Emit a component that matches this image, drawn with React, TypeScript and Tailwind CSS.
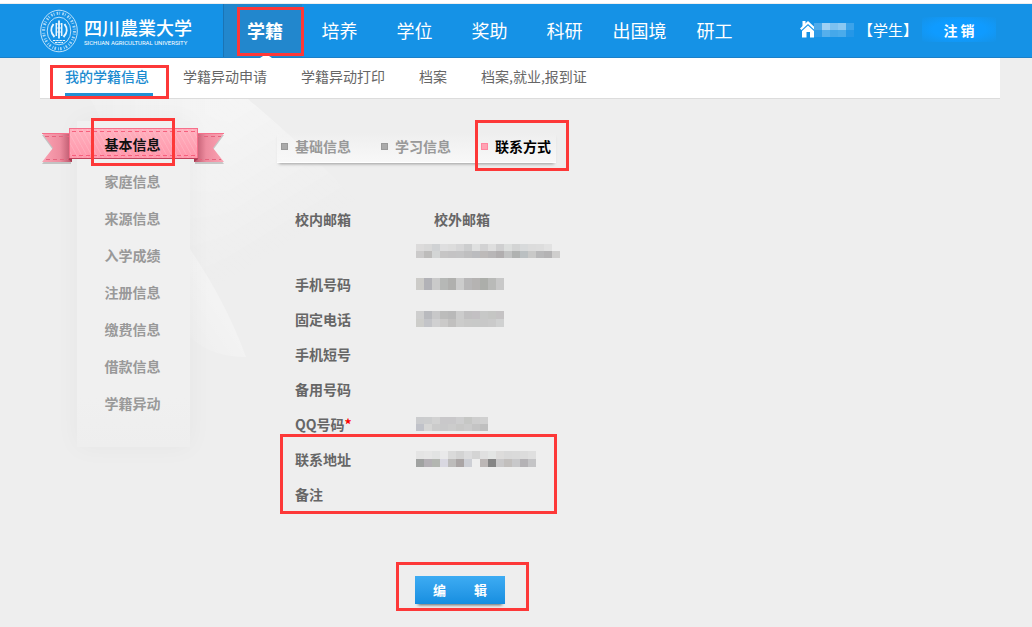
import { useState } from 'react';

const MODULES = ['学籍', '培养', '学位', '奖助', '科研', '出国境', '研工'];
const PAGES = ['我的学籍信息', '学籍异动申请', '学籍异动打印', '档案', '档案,就业,报到证'];
const SECTIONS = ['基本信息', '家庭信息', '来源信息', '入学成绩', '注册信息', '缴费信息', '借款信息', '学籍异动'];
const TABS = ['基础信息', '学习信息', '联系方式'];

// blocks that hide private values: rows of 8px cells, '' leaves a cell empty
const USER = [
  ['#4da9ea', '#9fd0f4', '#7cc1f0', '#8ac8f2', '#3ba3ea'],
  ['#2d9be8', '#55afec', '#45a8ea', '#4aabeb', '#2597e7'],
];
const MAIL = [
  ['#dcdbdb', '#d8d8d8', '#d0d2d4', '#dededf', '#dcdcdc', '#d6d6d7', '#cccdce', '#dfe0e0', '#d2d2d3', '#dedede', '#cfcfd0', '#dcdedd', '#d3d4d4', '#d8dadb', '#dcdcdc', '#dddddd', '#e2e2e2', ''],
  ['#cbcaca', '#bdbcbb', '#d3d5d5', '#c6c5c5', '#c4c3c4', '#c4c4c5', '#bfbfc0', '#bbbcbf', '#bdbab9', '#b8b6b7', '#b1aeaf', '#c2c3c3', '#b0b2b1', '#bbc0c2', '#c9c9c8', '#b8b8b9', '#b4b3b4', '#cfcecd'],
];
const PHONE = [['#cccbc8', '#b2b2b7', '#cacaca', '#b6b8b6', '#b0b0ae', '#cccccc', '#b8b7b8', '#b5b3b2', '#acaeaa', '#b9bab8', '#c8c8c8']];
const TEL = [
  ['#cecece', '#b9babe', '#c8c8c9', '#bcbcbb', '#b9b9b9', '#cccccc', '#c1c0c1', '#c3c0c3', '#c7c8c7', '#c5c6c4', '#c5c3c4'],
  ['#cdcdca', '#c3c4c8', '#d0d0d1', '#cbcac9', '#c1c0bf', '#cccccb', '#c9c9c8', '#c8c9c8', '#c8c8c8', '#cacaca', '#d0d1d1'],
];
const QQ = [
  ['#cbccce', '#cccdce', '#d2d2d2', '#c9c8ca', '#c9c8ca', '#cececf', '#c6c7c5', '#cecece', '#d0d0d0'],
  ['#c0c2c9', '#d6d6d5', '#cbcbcb', '#c9c9ca', '#cccccc', '#c8c8c7', '#cbcbcb', '#c4c4c4', '#bfbfbf'],
];
const ADDR = [
  ['#e4e4e4', '#e6e6e6', '#e2e3e3', '#e9e9ea', '#dadada', '#d3d3d3', '#dcdcdd', '#d4d4d4', '#e0e0e0', '#e3e5e4', '#dddcdb', '#d9d9d9', '#dadada', '#dcdcdc', '#dfdfdf'],
  ['#a0a2a1', '#b4b0b5', '#b3b6b1', '#d9d8e1', '#bdbcbb', '#aaa5a5', '#cdcfd5', '#eeeeee', '#bcb7b6', '#858585', '#c9c8c9', '#c2bfbd', '#c8c8ca', '#b4b2b5', '#c4c4c6'],
];

function Mark({ className }: { className: string }) {
  return <span className={`absolute border-[3px] border-[#fd3838] pointer-events-none ${className}`} />;
}

function Mosaic({ rows, className = 'h-4' }: { rows: string[][]; className?: string }) {
  return (
    <span className={`flex flex-col ${className}`}>
      {rows.map((cells, r) => (
        <span key={r} className="flex flex-1">
          {cells.map((c, i) => (
            <span key={i} className="w-2" style={{ backgroundColor: c }} />
          ))}
        </span>
      ))}
    </span>
  );
}

function Emblem() {
  return (
    <svg viewBox="0 0 40 44" className="w-10 h-11" fill="none" stroke="#e9f5fe">
      <ellipse cx="19" cy="22" rx="18.3" ry="20.8" strokeWidth=".8" />
      <ellipse cx="19" cy="22" rx="15.4" ry="17.8" strokeWidth="3" strokeDasharray="1.6 1.2 .8 2.2" opacity=".7" />
      <ellipse cx="19" cy="22" rx="11.8" ry="13.8" strokeWidth=".8" />
      <path d="M13.5 15c-3 4-3 9 1 13M24.5 15c3 4 3 9-1 13" strokeWidth="2" />
      <path d="M16.3 14v13M21.7 14v13" strokeWidth="1.5" />
      <path d="M19 11.5v18" strokeWidth="1.8" />
      <path d="M16 15h6M16 19h6M16 23h6" strokeWidth=".8" />
      <path d="M13 31.5h12M15 33.5h8" strokeWidth="1" strokeDasharray="2.5 .7" />
    </svg>
  );
}

function Ribbon() {
  return (
    <svg viewBox="0 0 184 42" className="absolute -left-9 top-0 w-[184px] h-[42px]">
      <defs>
        <linearGradient id="band" x1="0" y1="0" x2="0" y2="1">
          <stop offset="0" stopColor="#ffb0be" />
          <stop offset="1" stopColor="#ff96aa" />
        </linearGradient>
        <linearGradient id="tailL">
          <stop offset="0" stopColor="#fba3b3" />
          <stop offset=".6" stopColor="#ee8c9f" />
          <stop offset="1" stopColor="#b95469" />
        </linearGradient>
        <linearGradient id="tailR">
          <stop offset="0" stopColor="#b95469" />
          <stop offset=".4" stopColor="#ee8c9f" />
          <stop offset="1" stopColor="#fba3b3" />
        </linearGradient>
        <pattern id="grain" width="5" height="9" patternUnits="userSpaceOnUse">
          <path d="M0 0l5 9" stroke="#fff" strokeWidth=".6" opacity=".25" />
        </pattern>
      </defs>
      <path d="M1 8h29v29H1l11-14z" fill="#000" opacity=".18" />
      <path d="M154 8h29l-11 15 11 14h-29z" fill="#000" opacity=".18" />
      <path d="M1 6h30v29H1l11-14z" fill="url(#tailL)" />
      <path d="M153 6h30l-11 15 11 14h-30z" fill="url(#tailR)" />
      <path d="M1 6.5h27M157 6.5h26" stroke="#f6708b" />
      <path d="M4 9.5h24M5 32.5h24M156 9.5h24M157 32.5h23" stroke="#e5647e" strokeDasharray="4 3" />
      <path d="M27 32h4v3zM153 32h4l-4 3z" fill="#a93a51" />
      <rect x="28.5" y="1.5" width="128" height="30" fill="url(#band)" stroke="#f6708b" />
      <rect x="29" y="2" width="127" height="29" fill="url(#grain)" />
      <path d="M31 4.5h124M31 28.5h124" stroke="#f6607d" strokeDasharray="4 3" />
      <path d="M28 31.5h129" stroke="#c0405a" />
    </svg>
  );
}

function Sheen() {
  return (
    <svg viewBox="0 0 992 528" preserveAspectRatio="xMinYMin slice" className="absolute inset-0 w-full h-full -z-10">
      <defs>
        <linearGradient id="beam" gradientUnits="userSpaceOnUse" x1="190" y1="0" x2="270" y2="130">
          <stop offset="0" stopColor="#fff" stopOpacity=".45" />
          <stop offset="1" stopColor="#fff" stopOpacity="0" />
        </linearGradient>
        <linearGradient id="glow" gradientUnits="userSpaceOnUse" x1="180" y1="210" x2="135" y2="240">
          <stop offset="0" stopColor="#fff" stopOpacity=".3" />
          <stop offset="1" stopColor="#fff" stopOpacity="0" />
        </linearGradient>
        <linearGradient id="soft" gradientUnits="userSpaceOnUse" x1="50" y1="0" x2="190" y2="0">
          <stop offset="0" stopColor="#fff" stopOpacity=".25" />
          <stop offset="1" stopColor="#fff" stopOpacity="1" />
        </linearGradient>
        <mask id="fade">
          <rect width="992" height="528" fill="url(#soft)" />
        </mask>
      </defs>
      <path d="M50 0h158c40 34 80 70 115 110v120H180C100 130 70 30 50 0z" fill="url(#beam)" mask="url(#fade)" />
      <path d="M150 150c20 30 40 64 56 108-20 0-40-5-56-20z" fill="url(#glow)" />
    </svg>
  );
}

function HomeIcon() {
  return (
    <svg viewBox="0 0 16 17" className="w-4 h-[17px]" fill="#fff">
      <path d="M0 7.5L8 0l8 7.5-1.5 1.5L8 3 1.5 9z" />
      <path d="M2.5 0h3v3.5l-3 2.5z" />
      <path d="M2 10l6-5.5L14 10v6.5h-4V11H6.5v5.5H2z" />
    </svg>
  );
}

const ROW = 'grid grid-cols-[121px_1fr] items-center h-[35px]';

export default function App() {
  const [section, setSection] = useState('基本信息');
  const [tab, setTab] = useState('联系方式');

  return (
    <div className="min-h-screen bg-[#eeeeee] text-sm text-[#666] font-['Noto_Sans_CJK_SC',sans-serif]">
      {/* Top bar */}
      <div className="h-1 bg-white border-b border-[#eee]" />
      <header className="flex items-stretch h-[54px] pl-10 pr-9 bg-[#1592e6] border-b border-[#1b80c8] text-white">
        <a href="#" className="flex items-center w-[183px] shrink-0">
          <Emblem />
          <span className="ml-1">
            <span className="block text-lg leading-6 font-medium whitespace-nowrap font-['Noto_Sans_CJK_JP',sans-serif]">四川農業大学</span>
            <span className="block text-[6px] leading-2 whitespace-nowrap font-[Roboto,sans-serif]">SICHUAN AGRICULTURAL UNIVERSITY</span>
          </span>
        </a>
        <nav className="flex text-lg">
          {MODULES.map((m, i) => (
            <a key={m} href="#" className={`relative flex items-center justify-center pb-0.5 ${i === 0 ? 'w-[79px] pl-1 bg-[#2287cd] border-l border-[#1a74b5] font-bold' : 'w-[75px]'}`}>
              {m}
              {i === 0 && (
                <>
                  <span className="absolute -bottom-px left-9 border-x-6 border-b-4 border-x-transparent border-b-white" />
                  <Mark className="left-[13px] -right-0.5 top-[3px] bottom-px" />
                </>
              )}
            </a>
          ))}
        </nav>
        <div className="flex items-center ml-auto pb-0.5">
          <HomeIcon />
          <span className="-ml-0.5"><Mosaic rows={USER} className="h-3.5" /></span>
          <span className="ml-1 text-[15px] whitespace-nowrap">【学生】</span>
          <button className="ml-1 w-[74px] h-[25px] font-bold bg-radial from-[#0f9bff] from-50% to-[#1592e6]">注 销</button>
        </div>
      </header>

      {/* Sub navigation */}
      <nav className="flex gap-[34px] h-[41px] ml-10 mr-8 pl-[25px] bg-white border-b border-[#dcdcdc]">
        {PAGES.map((p, i) => (
          <a key={p} href="#" className={`relative h-[38px] leading-9 whitespace-nowrap ${i === 0 ? 'pr-1 -mr-1 border-b-3 border-[#2090d4] text-[#1c8bd0] font-medium' : ''}`}>
            {p}
            {i === 0 && <Mark className="-left-[15px] -right-4 top-[7px] -bottom-[6px]" />}
          </a>
        ))}
      </nav>

      <div className="relative isolate flex ml-10 pb-4">
        <Sheen />
        {/* Sidebar */}
        <aside className="w-[113px] ml-[37px] mt-[22px] h-[326px] shrink-0 pt-1.5 bg-linear-to-b from-[#f0f0f0] from-85% to-[#eeeeee] shadow-[0_0_24px_rgba(0,0,0,0.04)]">
          {SECTIONS.map(s => (
            <div key={s} className="relative h-[37px]">
              {s === section && <Ribbon />}
              <button onClick={() => setSection(s)} className={`relative block w-full h-[35px] pr-0.5 pb-0.5 text-center font-bold ${s === section ? 'text-[#111]' : 'text-[#999]'}`}>
                {s}
              </button>
              {s === '基本信息' && <Mark className="left-3.5 right-[15px] -top-[9px] -bottom-[2px]" />}
            </div>
          ))}
        </aside>

        {/* Contact details */}
        <main className="flex-1 ml-[87px] pt-[33px]">
          <div className="flex gap-[30px] w-[279px] h-[31px] pl-1 bg-linear-to-b from-transparent to-[#f8f8f8] border-b border-white shadow-[0_3px_3px_-2px_rgba(0,0,0,0.35)]">
            {TABS.map(t => (
              <button key={t} onClick={() => setTab(t)} className={`relative flex items-center gap-[7px] pb-0.5 whitespace-nowrap font-bold ${t === tab ? 'text-black' : 'text-[#999]'}`}>
                <span className={`size-[7px] border ${t === tab ? 'bg-[#ffa3b3] border-[#ff86a0]' : 'bg-[#aaa] border-[#999]'}`} />
                {t}
                {t === '联系方式' && <Mark className="-left-[6px] -right-[18px] -top-3 -bottom-[9px]" />}
              </button>
            ))}
          </div>

          <div className="mt-[38px] ml-[18px] font-bold">
            <div className={ROW}>
              <span>校内邮箱</span>
              <span className="pl-[18px]">校外邮箱</span>
            </div>
            <div className="h-[30px] pl-[121px] pt-2">
              <Mosaic rows={MAIL} className="h-3.5" />
            </div>
            <div className={ROW}><span>手机号码</span><Mosaic rows={PHONE} className="h-3" /></div>
            <div className={ROW}><span>固定电话</span><Mosaic rows={TEL} /></div>
            <div className={ROW}><span>手机短号</span></div>
            <div className={ROW}><span>备用号码</span></div>
            <div className={ROW}>
              <span>QQ号码<span className="text-[#ff0000]">*</span></span>
              <Mosaic rows={QQ} className="h-3.5" />
            </div>
            <div className="relative">
              <div className={ROW}><span>联系地址</span><Mosaic rows={ADDR} /></div>
              <div className={ROW}><span>备注</span></div>
              <Mark className="-left-[15px] w-[277px] -top-[7px] -bottom-[3px]" />
            </div>
          </div>

          <div className="relative ml-[138px] mt-[65px] w-[90px]">
            <button className="block w-full h-7 text-[13px] text-white font-bold bg-linear-to-b from-[#3dacf3] to-[#158ee0] shadow-[0_4px_3px_-3px_rgba(0,0,0,0.6)]">
              <span className="flex justify-between px-[18px]"><span>编</span><span>辑</span></span>
            </button>
            <Mark className="-left-[19px] -right-6 -top-3.5 -bottom-[7px]" />
          </div>
        </main>
      </div>
    </div>
  );
}
